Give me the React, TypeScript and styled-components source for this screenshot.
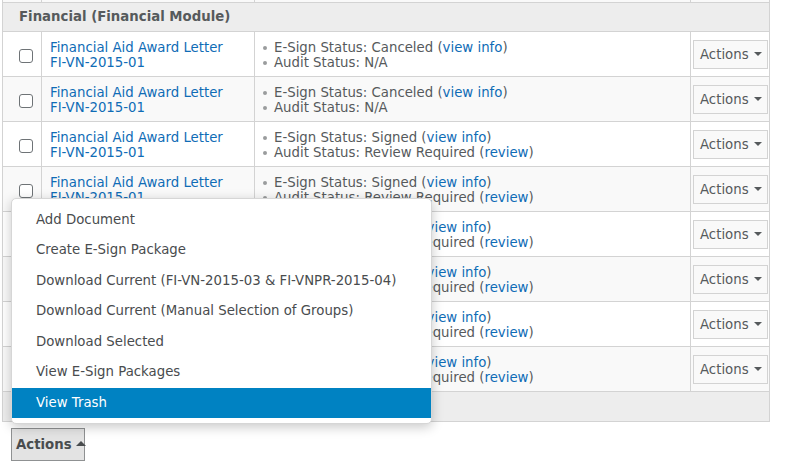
import React from "react";
import styled, { createGlobalStyle } from "styled-components";

const GlobalStyle = createGlobalStyle`
  * { box-sizing: border-box; }
  html { overflow: hidden; }
  html, body { margin: 0; padding: 0; background: #fff; }
  body { font-family: "DejaVu Sans", Verdana, sans-serif; font-size: 13.3px; color: #565a5c; }
`;

type Doc = {
  name: string;
  code: string;
  esign: string;
  audit: string;
  review: boolean;
};

const docs: Doc[] = [
  { name: "Financial Aid Award Letter", code: "FI-VN-2015-01", esign: "Canceled", audit: "N/A", review: false },
  { name: "Financial Aid Award Letter", code: "FI-VN-2015-01", esign: "Canceled", audit: "N/A", review: false },
  { name: "Financial Aid Award Letter", code: "FI-VN-2015-01", esign: "Signed", audit: "Review Required", review: true },
  { name: "Financial Aid Award Letter", code: "FI-VN-2015-01", esign: "Signed", audit: "Review Required", review: true },
  { name: "Financial Aid Award Letter", code: "FI-VN-2015-01", esign: "Signed", audit: "Review Required", review: true },
  { name: "Financial Aid Award Letter", code: "FI-VN-2015-01", esign: "Signed", audit: "Review Required", review: true },
  { name: "Financial Aid Award Letter", code: "FI-VN-2015-01", esign: "Signed", audit: "Review Required", review: true },
  { name: "Financial Aid Award Letter", code: "FI-VN-2015-01", esign: "Signed", audit: "Review Required", review: true },
];

const menuItems = [
  "Add Document",
  "Create E-Sign Package",
  "Download Current (FI-VN-2015-03 & FI-VNPR-2015-04)",
  "Download Current (Manual Selection of Groups)",
  "Download Selected",
  "View E-Sign Packages",
  "View Trash",
];

const App: React.FC = () => {
  return (
    <>
      <GlobalStyle />
      <Page>
        <Table>
          <colgroup>
            <col style={{ width: 39 }} />
            <col style={{ width: 213 }} />
            <col style={{ width: 436 }} />
            <col style={{ width: 79 }} />
          </colgroup>
          <tbody>
            {/* tail of the row above, scrolled out of view */}
            <Row $alt>
              <Cell />
              <Cell />
              <Cell />
              <Cell />
            </Row>
            <tr>
              <GroupHeader colSpan={4}>Financial (Financial Module)</GroupHeader>
            </tr>
            {docs.map((d, i) => (
              <Row key={i} $alt={i % 2 === 1}>
                <CheckCell>
                  <Check type="checkbox" />
                </CheckCell>
                <Cell>
                  <Link>{d.name}</Link>
                  <br />
                  <Link>{d.code}</Link>
                </Cell>
                <Cell>
                  <StatusList>
                    <li>
                      E-Sign Status: {d.esign} (<Link>view info</Link>)
                    </li>
                    <li>
                      Audit Status: {d.audit}
                      {d.review && (
                        <>
                          {" "}(<Link>review</Link>)
                        </>
                      )}
                    </li>
                  </StatusList>
                </Cell>
                <ActionCell>
                  <RowButton>
                    Actions <Caret />
                  </RowButton>
                </ActionCell>
              </Row>
            ))}
            <tr>
              <FooterCell colSpan={4} />
            </tr>
          </tbody>
        </Table>
        <BottomBar>
          <ButtonWrap>
            <Menu>
              {menuItems.map((m) => (
                <MenuItem key={m} $active={m === "View Trash"}>
                  {m}
                </MenuItem>
              ))}
            </Menu>
            <BottomButton>
              Actions <Caret $up />
            </BottomButton>
          </ButtonWrap>
        </BottomBar>
      </Page>
    </>
  );
};

const Page = styled.div`
  display: flow-root;
  padding-left: 2px;
  width: 785px;
`;

const Table = styled.table`
  width: 768px;
  margin-top: -42px;
  table-layout: fixed;
  border-collapse: separate;
  border-spacing: 0;
  border-left: 1px solid #d3d3d3;
`;

const Row = styled.tr<{ $alt?: boolean }>`
  background: ${(p) => (p.$alt ? "#f9f9f9" : "#ffffff")};
`;

const Cell = styled.td`
  padding: 8px 8px 6px;
  height: 45px;
  line-height: 15px;
  vertical-align: middle;
  border-right: 1px solid #d3d3d3;
  border-bottom: 1px solid #d3d3d3;
  white-space: nowrap;
`;

const CheckCell = styled(Cell)`
  padding: 9px 0 5px 16px;
`;

const Check = styled.input`
  appearance: none;
  display: block;
  width: 14px;
  height: 14px;
  margin: 0;
  border: 1px solid #6e7376;
  border-radius: 3px;
  background: #fff;
`;

const ActionCell = styled(Cell)`
  padding: 0 0 0 2px;
`;

const GroupHeader = styled.td`
  background: #ededed;
  padding: 6px 16px;
  height: 29px;
  line-height: 16px;
  font-weight: bold;
  color: #565a5c;
  border-right: 1px solid #d3d3d3;
  border-bottom: 1px solid #d3d3d3;
`;

const FooterCell = styled.td`
  background: #ededed;
  height: 30px;
  border-right: 1px solid #d3d3d3;
  border-bottom: 1px solid #d3d3d3;
`;

const Link = styled.a`
  color: #0f6cb6;
  cursor: pointer;
`;

const StatusList = styled.ul`
  list-style: none;
  margin: 0;
  padding: 0;

  li {
    position: relative;
    padding-left: 11px;
  }

  li::before {
    content: "";
    position: absolute;
    left: 0;
    top: 6px;
    width: 4px;
    height: 4px;
    border-radius: 50%;
    background: #9a9c9d;
  }
`;

const Caret = styled.span<{ $up?: boolean }>`
  display: inline-block;
  width: 0;
  height: 0;
  margin-left: 1px;
  vertical-align: middle;
  ${(p) =>
    p.$up
      ? `border-left: 5px solid transparent;
         border-right: 5px solid transparent;
         border-bottom: 5px solid currentColor;
         margin-top: -2px;`
      : `border-left: 4px solid transparent;
         border-right: 4px solid transparent;
         border-top: 4px solid currentColor;
         margin-top: -1px;`}
`;

const RowButton = styled.button`
  display: inline-flex;
  align-items: center;
  gap: 4px;
  width: 75px;
  height: 29px;
  padding: 0 0 0 6px;
  font: inherit;
  color: #565a5c;
  background: #f9f9f9;
  border: 1px solid #d3d3d3;
  border-radius: 0;
`;

const BottomBar = styled.div`
  padding: 6px 0 0 9px;
`;

const ButtonWrap = styled.div`
  position: relative;
  display: inline-block;
`;

const BottomButton = styled.button`
  display: inline-flex;
  align-items: center;
  gap: 3px;
  width: 74px;
  height: 33px;
  padding: 0 0 0 4px;
  font: inherit;
  font-weight: bold;
  color: #494c4e;
  background: #e3e3e3;
  border: 1px solid #8f9192;
  border-radius: 0;
`;

const Menu = styled.div`
  position: absolute;
  left: 0;
  bottom: calc(100% + 4px);
  width: 421px;
  padding: 6px 0 5px;
  background: #fff;
  border: 1px solid #d6d6d6;
  border-radius: 5px;
  box-shadow: 0 3px 12px rgba(0, 0, 0, 0.22);
`;

const MenuItem = styled.div<{ $active?: boolean }>`
  height: 30.5px;
  line-height: 30.5px;
  padding-left: 24px;
  white-space: nowrap;
  color: ${(p) => (p.$active ? "#ffffff" : "#494c4e")};
  background: ${(p) => (p.$active ? "#0082c2" : "transparent")};
`;

export default App;
